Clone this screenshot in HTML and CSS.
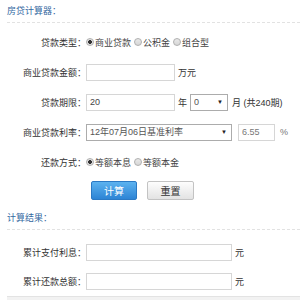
FILE: index.html
```html
<html>
<head>
	<meta charset="utf-8">
	<title>房贷计算器</title>
	<link rel="stylesheet" href="styles.css">
</head>
<body>
	<div class="panel">
		<div class="caption">房贷计算器：</div>
		<div class="form">
			<div class="row">
				<span class="label">贷款类型：</span>
				<label class="opt"><input type="radio" name="loanType" checked>商业贷款</label>
				<label class="opt"><input type="radio" name="loanType">公积金</label>
				<label class="opt"><input type="radio" name="loanType">组合型</label>
			</div>
			<div class="row">
				<span class="label">商业贷款金额：</span>
				<input class="text w-amount" type="text" value="">
				<span class="unit">万元</span>
			</div>
			<div class="row">
				<span class="label">贷款期限：</span>
				<input class="text w-amount" type="text" value="20">
				<span class="unit">年</span>
				<span class="selectWrap">
					<select class="sel w-month"><option>0</option></select>
				</span>
				<span class="unit gap4">月 (共240期)</span>
			</div>
			<div class="row">
				<span class="label">商业贷款利率：</span>
				<span class="selectWrap">
					<select class="sel w-rate"><option>12年07月06日基准利率</option></select>
				</span>
				<input class="text w-pct" type="text" value="6.55">
				<span class="unit gap5">%</span>
			</div>
			<div class="row">
				<span class="label">还款方式：</span>
				<label class="opt"><input type="radio" name="payType" checked>等额本息</label>
				<label class="opt"><input type="radio" name="payType">等额本金</label>
			</div>
			<div class="actions">
				<button class="btn btnBlue" type="button">计算</button>
				<button class="btn btnGray" type="button">重置</button>
			</div>
		</div>
		<div class="caption caption2">计算结果：</div>
		<div class="form result">
			<div class="row">
				<span class="label">累计支付利息：</span>
				<input class="text w-result" type="text" value="">
				<span class="unit">元</span>
			</div>
			<div class="row">
				<span class="label">累计还款总额：</span>
				<input class="text w-result" type="text" value="">
				<span class="unit">元</span>
			</div>
		</div>
		<div class="bottomBar"></div>
	</div>
</body>
</html>
```

FILE: styles.css
```css
body {
	margin: 0;
	background-color: #fff;
	font-family: "Liberation Sans", "Noto Sans CJK SC", sans-serif;
	font-size: 9px;
	color: #333;
}
.panel {
	width: 300px;
	overflow: hidden;
}
.caption {
	margin-left: 7px;
	height: 22px;
	line-height: 22px;
	color: #33689f;
	border-bottom: 1px dashed #e2e2e2;
}
.caption2 {
	margin-top: 7px;
}
.form {
	padding-top: 4px;
}
.result {
	padding-top: 8px;
}
.row {
	display: flex;
	align-items: center;
	height: 30px;
}
.result .row {
	height: 29px;
}
.label {
	width: 86px;
	flex: none;
	text-align: right;
	color: #333;
}
.opt {
	display: flex;
	align-items: center;
	margin-right: 3px;
	color: #444;
}
.opt input {
	-webkit-appearance: none;
	appearance: none;
	box-sizing: border-box;
	width: 8px;
	height: 8px;
	margin: 0 1px 0 0;
	border: 1px solid #b0b0b0;
	border-radius: 50%;
	background: linear-gradient(#e9e9e9, #d6d6d6);
}
.opt input:checked {
	background: radial-gradient(circle, #333 0, #333 1.6px, #e4e4e4 2.2px);
}
.text {
	box-sizing: border-box;
	height: 17px;
	margin: 0;
	padding: 0 3px;
	border: 1px solid #d6d6d6;
	font-family: inherit;
	font-size: 9px;
	color: #444;
	outline: none;
}
.w-amount {
	width: 89px;
}
.w-pct {
	width: 37px;
	margin-left: 6px;
	color: #777;
}
.w-result {
	width: 146px;
}
.unit {
	margin-left: 3px;
	color: #333;
}
.gap4 {
	margin-left: 4px;
}
.gap5 {
	margin-left: 5px;
	color: #777;
}
.selectWrap {
	position: relative;
	display: inline-block;
	height: 17px;
}
.selectWrap::after {
	content: "▼";
	position: absolute;
	right: 5px;
	top: 4px;
	font-size: 6px;
	line-height: 8px;
	color: #222;
	pointer-events: none;
}
.row .selectWrap:nth-child(4) {
	margin-left: 3px;
}
.sel {
	-webkit-appearance: none;
	appearance: none;
	box-sizing: border-box;
	height: 17px;
	margin: 0;
	padding: 0 0 0 3px;
	border: 1px solid #acacac;
	border-radius: 0;
	background-color: #fff;
	font-family: inherit;
	font-size: 9px;
	color: #555;
}
.w-month {
	width: 38px;
}
.w-rate {
	width: 146px;
}
.actions {
	display: flex;
	gap: 10px;
	margin-top: 4px;
	padding-left: 91px;
}
.btn {
	box-sizing: border-box;
	height: 19px;
	padding: 0;
	border-radius: 2px;
	font-family: inherit;
	font-size: 10px;
	cursor: pointer;
}
.btnBlue {
	width: 46px;
	border: 1px solid #2b79c4;
	background: linear-gradient(#5cb2ef, #2d84d5);
	color: #fff;
}
.btnGray {
	width: 47px;
	border: 1px solid #c3c3c3;
	background: linear-gradient(#fdfdfd, #e3e3e3);
	color: #333;
}
.bottomBar {
	margin-left: 7px;
	height: 6px;
	border-top: 1px solid #e3e3e3;
	background-color: #f2f2f2;
}
```
